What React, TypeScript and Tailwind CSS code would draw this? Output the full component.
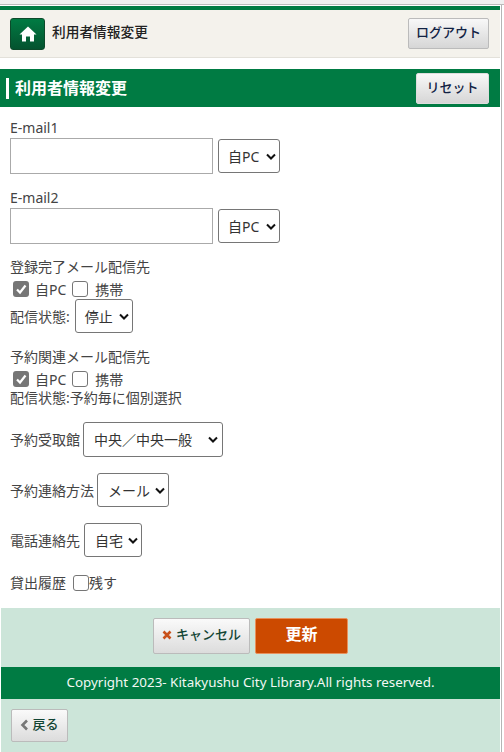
import React from "react";

const font = "font-['Noto_Sans','Noto_Sans_CJK_JP',sans-serif]";

function Chevron() {
  return (
    <svg width="10" height="7" viewBox="0 0 10 7" className="shrink-0">
      <path d="M1 1.5 L5 5.5 L9 1.5" fill="none" stroke="#111" strokeWidth="2" />
    </svg>
  );
}

function Select({ label, className }: { label: string; className: string }) {
  return (
    <div
      className={`flex items-center justify-between rounded-[3px] border border-[#767676] bg-white text-[14px] text-[#333] ${className}`}
    >
      <span>{label}</span>
      <Chevron />
    </div>
  );
}

function Check({ checked }: { checked?: boolean }) {
  return checked ? (
    <div className="flex h-[16px] w-[16px] shrink-0 items-center justify-center rounded-[3px] bg-[#767676]">
      <svg width="12" height="12" viewBox="0 0 12 12">
        <path d="M2 6.5 L5 9.5 L10.5 2.5" fill="none" stroke="#fff" strokeWidth="2.2" />
      </svg>
    </div>
  ) : (
    <div className="h-[16px] w-[16px] shrink-0 rounded-[3px] border border-[#767676] bg-white" />
  );
}

function MailField({ label }: { label: string }) {
  return (
    <div className="flex flex-col">
      <div className="h-[18px] text-[14px] leading-[16px] text-[#444]">{label}</div>
      <div className="flex items-center gap-[5px]">
        <div className="h-[36px] w-[203px] border border-[#aaa] bg-white" />
        <Select label="自PC" className="h-[34px] w-[62px] pl-[9px] pr-[3px]" />
      </div>
    </div>
  );
}

function Targets() {
  return (
    <div className="flex h-[22px] items-center pt-[2px] text-[14px] text-[#444]">
      <div className="ml-[3px]"><Check checked /></div>
      <span className="ml-[6px]">自PC</span>
      <div className="ml-[6px]"><Check /></div>
      <span className="ml-[7px]">携帯</span>
    </div>
  );
}

export default function App() {
  return (
    <div className={`${font} h-[752px] w-[504px] overflow-hidden bg-white`}>
      <div className="h-[5px] border-b border-[#bbb] bg-[#f0f0f0]" />
      <div className="h-[747px] w-[502px] border-r border-[#b5b5b5]">
        <div className="mr-[1px] flex h-[53px] flex-col">
          <div className="mt-[1px] h-[4px] bg-[#007b43]" />
          <div className="flex flex-1 items-center justify-between border-b border-[#e3e1da] bg-[#f4f2ec] pl-[10px] pr-[11px]">
            <div className="flex items-center gap-[7px]">
              <div className="flex h-[32px] w-[35px] items-center justify-center rounded-[3px] border border-[#0c4a2a] bg-gradient-to-b from-[#007b43] to-[#04532f]">
                <svg width="18" height="16" viewBox="0 0 18 16">
                  <path d="M9 0.5 L0.5 8.5 L3 8.5 L3 15.5 L7 15.5 L7 10.5 L11 10.5 L11 15.5 L15 15.5 L15 8.5 L17.5 8.5 Z" fill="#fff" />
                </svg>
              </div>
              <span className="pb-[2px] text-[13.7px] font-medium text-[#222]">利用者情報変更</span>
            </div>
            <div className="flex h-[31px] w-[81px] items-center justify-center rounded-[2px] border border-[#bbb] bg-gradient-to-b from-[#f8f8f8] to-[#d6d6d6] pb-[2px] text-[13px] font-medium text-[#124]">
              ログアウト
            </div>
          </div>
        </div>

        <div className="mr-[1px] mt-[11px] flex h-[38px] items-center justify-between bg-[#007b43] pl-[6px] pr-[11px]">
          <div className="flex items-center">
            <div className="h-[21px] w-[3px] bg-white" />
            <span className="ml-[6px] text-[16px] font-bold text-white">利用者情報変更</span>
          </div>
          <div className="flex h-[31px] w-[73px] items-center justify-center rounded-[2px] border border-[#ddd] bg-gradient-to-b from-[#f8f8f8] to-[#d6d6d6] text-[13px] font-medium text-[#124]">
            リセット
          </div>
        </div>

        <div className="flex h-[501px] flex-col pl-[10px] pt-[13px]">
          <MailField label="E-mail1" />
          <div className="mt-[16px]"><MailField label="E-mail2" /></div>
          <div className="mt-[15px] h-[18px] text-[14px] leading-[16px] text-[#444]">登録完了メール配信先</div>
          <Targets />
          <div className="flex items-center gap-[5px] text-[14px] text-[#444]">
            <span>配信状態:</span>
            <Select label="停止" className="h-[34px] w-[58px] pl-[9px] pr-[3px]" />
          </div>
          <div className="mt-[16px] h-[18px] text-[14px] leading-[16px] text-[#444]">予約関連メール配信先</div>
          <Targets />
          <div className="h-[19px] text-[14px] leading-[17px] text-[#444]">配信状態:予約毎に個別選択</div>
          <div className="mt-[14px] flex items-center gap-[3px] text-[14px] text-[#444]">
            <span>予約受取館</span>
            <Select label="中央／中央一般" className="h-[35px] w-[140px] pl-[10px] pr-[4px]" />
          </div>
          <div className="mt-[16px] flex items-center gap-[3px] text-[14px] text-[#444]">
            <span>予約連絡方法</span>
            <Select label="メール" className="h-[34px] w-[72px] pl-[10px] pr-[3px]" />
          </div>
          <div className="mt-[16px] flex items-center gap-[4px] text-[14px] text-[#444]">
            <span>電話連絡先</span>
            <Select label="自宅" className="h-[34px] w-[58px] pl-[10px] pr-[3px]" />
          </div>
          <div className="mt-[15px] flex items-center gap-[7px] text-[14px] text-[#444]">
            <span>貸出履歴</span>
            <Check />
            <span className="-ml-[7px]">残す</span>
          </div>
        </div>

        <div className="ml-[1px] mr-[1px] flex h-[144px] flex-col bg-[#cce5d9]">
          <div className="flex h-[59px] items-start justify-center gap-[5px] pt-[10px]">
            <div className="flex h-[36px] w-[97px] items-center justify-center gap-[4px] rounded-[2px] border border-[#bbb] bg-gradient-to-b from-[#fafafa] to-[#dcdcdc] pb-[2px] text-[13px] font-medium text-[#143]">
              <svg width="10" height="10" viewBox="0 0 10 10">
                <path d="M1.5 1.5 L8.5 8.5 M8.5 1.5 L1.5 8.5" stroke="#c8501a" strokeWidth="2.6" />
              </svg>
              キャンセル
            </div>
            <div className="flex h-[36px] w-[93px] items-center justify-center rounded-[2px] border border-[#e8915c] bg-[#cc4a00] pb-[5px] text-[16px] font-bold text-white">
              更新
            </div>
          </div>
          <div className="flex h-[32px] items-center justify-center bg-[#007b43] pb-[2px] text-[13.4px] text-[#f2f8f4]">
            Copyright 2023- Kitakyushu City Library.All rights reserved.
          </div>
          <div className="pl-[10px] pt-[10px]">
            <div className="flex h-[33px] w-[57px] items-center justify-center gap-[3px] rounded-[2px] border border-[#bbb] bg-gradient-to-b from-[#fafafa] to-[#dcdcdc] pb-[2px] text-[13px] font-medium text-[#143]">
              <svg width="9" height="12" viewBox="0 0 9 12">
                <path d="M7 1.5 L2.5 6 L7 10.5" fill="none" stroke="#777" strokeWidth="2.6" />
              </svg>
              戻る
            </div>
          </div>
        </div>
      </div>
    </div>
  );
}
